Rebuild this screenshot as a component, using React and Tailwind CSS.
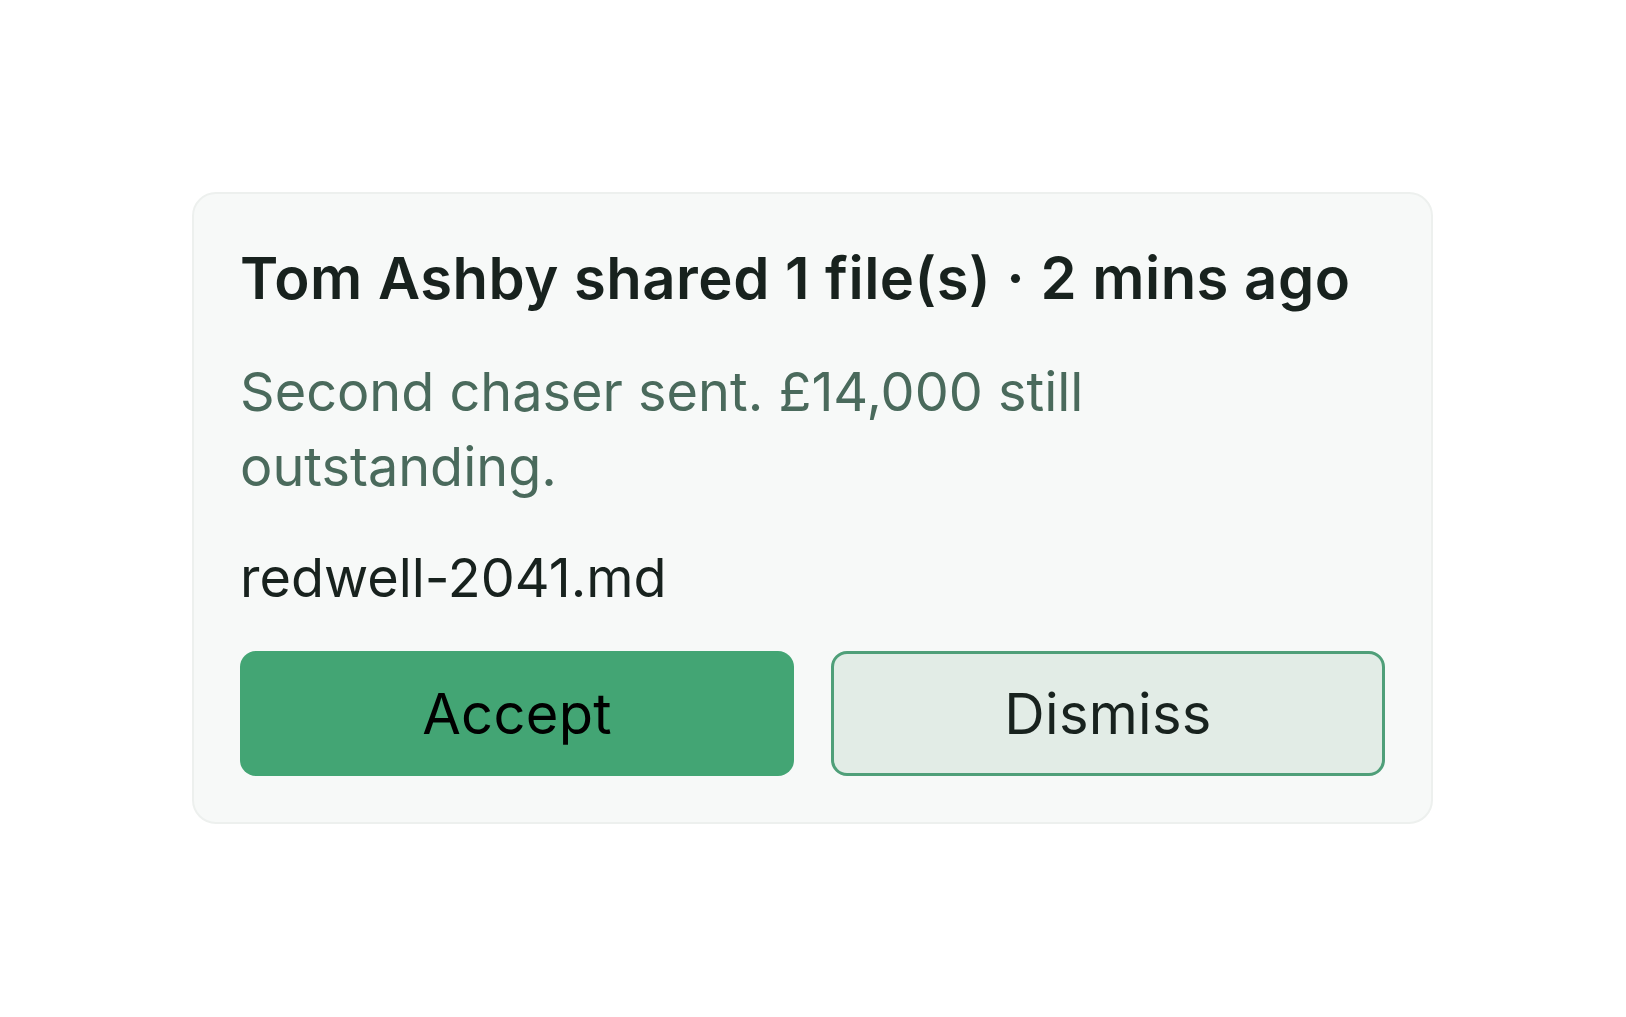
import React from "react";

const font = { fontFamily: "Inter, 'Noto Sans', sans-serif" };

export const ShareCard = () => {
  return (
    <div className="w-[1241px] rounded-[24px] border-2 border-[#edf0ee] bg-[#f7f9f8] p-[46px]">
      <h2 className="text-[58px] leading-[76px] font-semibold tracking-[0.5px] text-[#18221e]">
        Tom Ashby shared 1 file(s) · 2 mins ago
      </h2>
      <p className="mt-[38px] text-[54px] leading-[75px] text-[#4a6a5c]">
        Second chaser sent. £14,000 still outstanding.
      </p>
      <div className="mt-[36px] text-[54px] leading-[75px] text-[#18221e]">
        redwell-2041.md
      </div>
      <div className="mt-[36px] grid grid-cols-2 gap-[37px]">
        <button className="h-[125px] rounded-[16px] bg-[#43a574] text-[56px] tracking-[0.3px] text-black">
          Accept
        </button>
        <button className="h-[125px] rounded-[16px] border-[3px] border-[#4f9f79] bg-[#e2ece6] text-[56px] tracking-[0.3px] text-[#18221e]">
          Dismiss
        </button>
      </div>
    </div>
  );
};

export default function App() {
  return (
    <div className="min-h-screen bg-white pt-[192px] pl-[192px]" style={font}>
      <ShareCard />
    </div>
  );
}
